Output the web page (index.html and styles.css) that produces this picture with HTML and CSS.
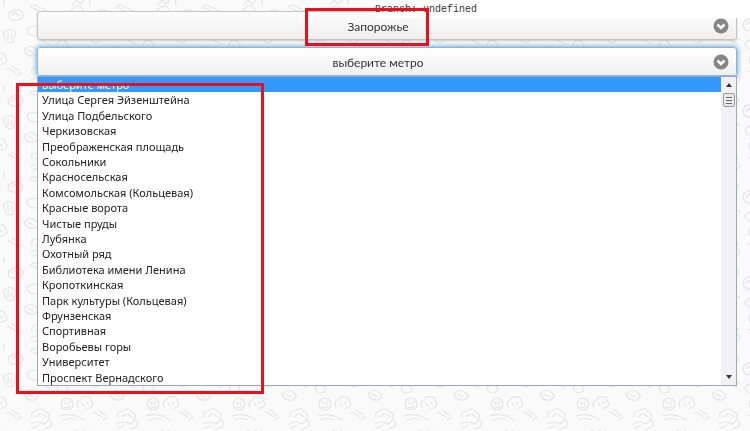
FILE: index.html
```
<!DOCTYPE html>
<html lang="ru">
<head>
    <meta charset="UTF-8">
    <meta name="viewport" content="width=device-width, initial-scale=1.0">
    <title>Выбор метро</title>
    <link rel="stylesheet" href="styles.css">
</head>
<body>
    <!-- Background doodles -->
    <svg class="doodles" aria-hidden="true">
        <defs>
            <pattern id="food" width="86" height="86" patternUnits="userSpaceOnUse">
                <g fill="none" stroke="#e4e4e4" stroke-width="1.2" stroke-linecap="round">
                    <circle cx="67" cy="60" r="6"/>
                    <path d="M64 58l2 2M70 57l-2 3M64 63q3 2 6-1"/>
                    <path d="M78 63q-3-7 3-7 1-5 5-3M0 53q5-1 5 4 4 3 0 6-6 3-13 0M82 59l2 3M0 58l2 2"/>
                    <path d="M60 72q9-3 19 1M63 76q7-3 13 0M80 74l4 2"/>
                    <path d="M32 73q-2-6 5-6 5-5 9 1 6 2 2 7M36 73l4-3M42 70l4 3"/>
                    <path d="M31 80q7-4 13 0l5-4q5 2 1 7l-6 2M33 84l5-2"/>
                    <path d="M8 68l8 5M12 66l7 5M17 76l4-3"/>
                    <path d="M4 5q-2-6 4-7M72 5l4-5 4 4 4-4M72 9q6-6 10-1t-6 5q-6 1-4-4"/>
                    <path d="M8 14q8-8 15-1 1 7-7 7-8 1-8-6M12 15l3-3 4 4"/>
                    <path d="M33 8l14 7M35 5l14 7M30 9q1-5 5-4M49 12q4 2 0 5"/>
                    <circle cx="61" cy="25" r="6"/>
                    <path d="M58 25l3-3 3 5M72 28q6-8 10-1l-8 7zM77 27l1 3"/>
                    <path d="M3 33q7-7 13 0l-3 9q-5 2-7-1zM8 33v6M12 34l-1 5"/>
                    <path d="M27 29q7-6 12 0t-5 7q-6 0-7-7M44 35l8 5M42 40l7 4"/>
                    <path d="M57 44q4-7 9-2t-3 7q-5 0-6-5M24 50q6-7 12-1 5 4-2 7-8 1-10-6M28 50l5 3"/>
                </g>
            </pattern>
        </defs>
        <rect width="100%" height="100%" fill="url(#food)"/>
    </svg>

    <pre class="debug">Branch: undefined</pre>

    <form class="filters">
        <div class="field city">
            <select class="picker" aria-label="Город">
                <option>Запорожье</option>
            </select>
            <svg class="arrow" viewBox="0 0 16 16" aria-hidden="true">
                <circle cx="8" cy="8" r="7.5"/>
                <path d="M4.5 6.5L8 10l3.5-3.5"/>
            </svg>
            <span class="mark"></span>
        </div>

        <div class="field metro">
            <select class="picker active" aria-label="Метро">
                <option>выберите метро</option>
            </select>
            <svg class="arrow" viewBox="0 0 16 16" aria-hidden="true">
                <circle cx="8" cy="8" r="7.5"/>
                <path d="M4.5 6.5L8 10l3.5-3.5"/>
            </svg>
        </div>

        <div class="dropdown">
            <select class="stations" size="20" aria-label="Станции метро">
                <option class="current">выберите метро</option>
                <option>Улица Сергея Эйзенштейна</option>
                <option>Улица Подбельского</option>
                <option>Черкизовская</option>
                <option>Преображенская площадь</option>
                <option>Сокольники</option>
                <option>Красносельская</option>
                <option>Комсомольская (Кольцевая)</option>
                <option>Красные ворота</option>
                <option>Чистые пруды</option>
                <option>Лубянка</option>
                <option>Охотный ряд</option>
                <option>Библиотека имени Ленина</option>
                <option>Кропоткинская</option>
                <option>Парк культуры (Кольцевая)</option>
                <option>Фрунзенская</option>
                <option>Спортивная</option>
                <option>Воробьевы горы</option>
                <option>Университет</option>
                <option>Проспект Вернадского</option>
            </select>
            <div class="scrollbar" aria-hidden="true">
                <svg class="scroll-up" viewBox="0 0 6 4"><path d="M0 4l3-4 3 4z"/></svg>
                <span class="thumb"></span>
                <svg class="scroll-down" viewBox="0 0 6 4"><path d="M0 0l3 4 3-4z"/></svg>
            </div>
            <span class="mark"></span>
        </div>
    </form>
</body>
</html>
```
FILE: styles.css
```
/* General Styles */
* {
    box-sizing: border-box;
}

body {
    min-height: 100vh;
    margin: 0;
    background-color: #fafafa;
    color: #333;
    font-family: "Noto Sans", "Open Sans", sans-serif;
    font-size: 12px;
}

.doodles {
    position: fixed;
    top: 0;
    left: 0;
    width: 100%;
    height: 100%;
    z-index: -1;
}

/* Debug output over the page */
.debug {
    position: absolute;
    top: 0;
    right: 0;
    left: 50%;
    z-index: 1;
    height: 18px;
    margin: 0;
    background: #fff;
    font: 10px/20px "Liberation Mono", monospace;
}

.filters {
    padding: 11px 13px 40px 37px;
}

.field {
    position: relative;
}

.city {
    margin-bottom: 7px;
}

.picker {
    display: block;
    width: 100%;
    height: 29px;
    padding: 2px 32px 0 14px;
    border: 1px solid #c4c4c4;
    border-radius: 3px;
    background: linear-gradient(#fdfdfd, #eee);
    box-shadow: 0 1px 2px rgba(0, 0, 0, 0.2);
    color: #333;
    font: 12px Lato, "Noto Sans", sans-serif;
    text-align: center;
    text-align-last: center;
    appearance: none;
}

.picker.active {
    border-color: #8db4d2;
    background: linear-gradient(#fff, #f0f0f0);
    box-shadow: 0 0 5px 1px #72aede;
}

.arrow {
    position: absolute;
    top: 7px;
    right: 8px;
    width: 16px;
    height: 16px;
    pointer-events: none;
}

.arrow circle {
    fill: #858585;
}

.arrow path {
    fill: none;
    stroke: #fff;
    stroke-width: 2.5;
}

/* Open list */
.dropdown {
    position: relative;
    display: flex;
    border: 1px solid #96a9c4;
    background: #fff;
}

.stations {
    flex: 1;
    height: 308px;
    padding: 0;
    border: 0;
    border-radius: 0;
    outline: 0;
    background: #fff;
    color: #222;
    font: 11px "Noto Sans", "Open Sans", sans-serif;
    overflow: hidden;
}

.stations option {
    height: 15px;
    min-height: 15px;
    padding: 0 4px;
    line-height: 15px;
}

.stations option:nth-child(5n + 2),
.stations option:nth-child(5n + 4) {
    height: 16px;
}

.stations .current {
    background: #3399ff;
    color: #fff;
}

.scrollbar {
    display: flex;
    flex-direction: column;
    align-items: center;
    width: 15px;
    padding: 6px 0;
    background: #f1f1f3;
}

.scrollbar svg {
    width: 6px;
    height: 4px;
    fill: #333;
}

.thumb {
    width: 12px;
    height: 14px;
    margin: 6px 0 auto;
    border: 1px solid #999;
    border-radius: 2px;
    background: repeating-linear-gradient(#666 0 1px, #eee 1px 3px) center / 6px 7px no-repeat #e8e8e8;
}

/* Red highlight frames */
.mark {
    position: absolute;
    z-index: 2;
    border: 3px solid #e8101c;
    pointer-events: none;
}

.city .mark {
    top: -3px;
    left: 50%;
    width: 124px;
    height: 38px;
    margin-left: -82px;
}

.dropdown .mark {
    top: 6px;
    bottom: -9px;
    left: -22px;
    width: 248px;
}
```
